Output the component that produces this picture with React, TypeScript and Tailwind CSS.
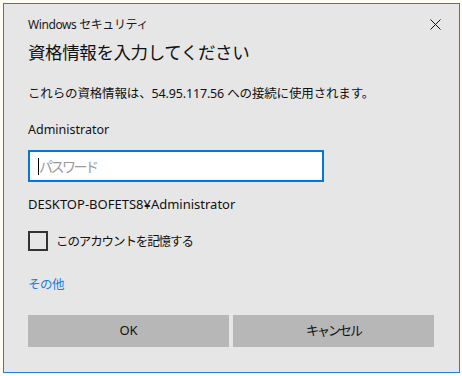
import React from 'react';

const font = { fontFamily: '"Noto Sans", "Noto Sans CJK JP", sans-serif' };

export default function App() {
  return (
    <div className="w-[462px] h-[376px] bg-[#fffcf3] pt-[3px] pl-[3px]" style={font}>
      <div className="w-[457px] h-[370px] border border-[#1883d7] bg-[#e6e6e6] flex flex-col text-[#000]">
        {/* title bar */}
        <div className="flex items-center justify-between pl-[24px] pr-[17px] pt-[11px] h-[31px]">
          <span className="text-[12px] leading-[16px] text-[#1a1a1a] tracking-[-0.4px]">Windows セキュリティ</span>
          <svg width="11" height="11" viewBox="0 0 11 11" className="mt-[-1px] mr-[1px]">
            <path d="M0.5 0.5L10.5 10.5M10.5 0.5L0.5 10.5" stroke="#111" strokeWidth="1" />
          </svg>
        </div>

        <div className="pl-[24px] flex flex-col">
          <h1 className="text-[17.5px] leading-[24px] mt-[5px] tracking-[-0.4px] text-[#111]">資格情報を入力してください</h1>
          <p className="text-[12.5px] leading-[17px] mt-[21px] text-[#111] tracking-[-0.15px]">
            これらの資格情報は、54.95.117.56 への接続に使用されます。
          </p>

          <p className="text-[12.5px] leading-[17px] mt-[19px] text-[#111]">Administrator</p>

          <div className="mt-[12px] w-[296px] h-[32px] border-2 border-[#0078d7] bg-white flex items-center pl-[8px]">
            <span className="w-[1px] h-[17px] bg-black" />
            <span className="text-[14px] text-[#9a9a9a] tracking-[-2.5px]">パスワード</span>
          </div>

          <p className="text-[13px] leading-[17px] mt-[14px] text-[#111]">DESKTOP-BOFETS8¥Administrator</p>

          <div className="flex items-center mt-[18px]">
            <span className="w-[20px] h-[20px] border-2 border-[#333] box-border" />
            <span className="ml-[8px] text-[12.5px] leading-[17px] text-[#111] tracking-[-1.1px]">このアカウントを記憶する</span>
          </div>

          <a className="text-[12.5px] leading-[18px] mt-[25px] text-[#1a7fd8] w-fit tracking-[-0.5px]">その他</a>

          <div className="flex gap-[4px] mt-[21px]">
            <button className="w-[201px] h-[32px] bg-[#b7b7b7] text-[13px] text-[#111]">OK</button>
            <button className="w-[201px] h-[32px] bg-[#b7b7b7] text-[13px] text-[#111] tracking-[-2px]">キャンセル</button>
          </div>
        </div>
      </div>
    </div>
  );
}
